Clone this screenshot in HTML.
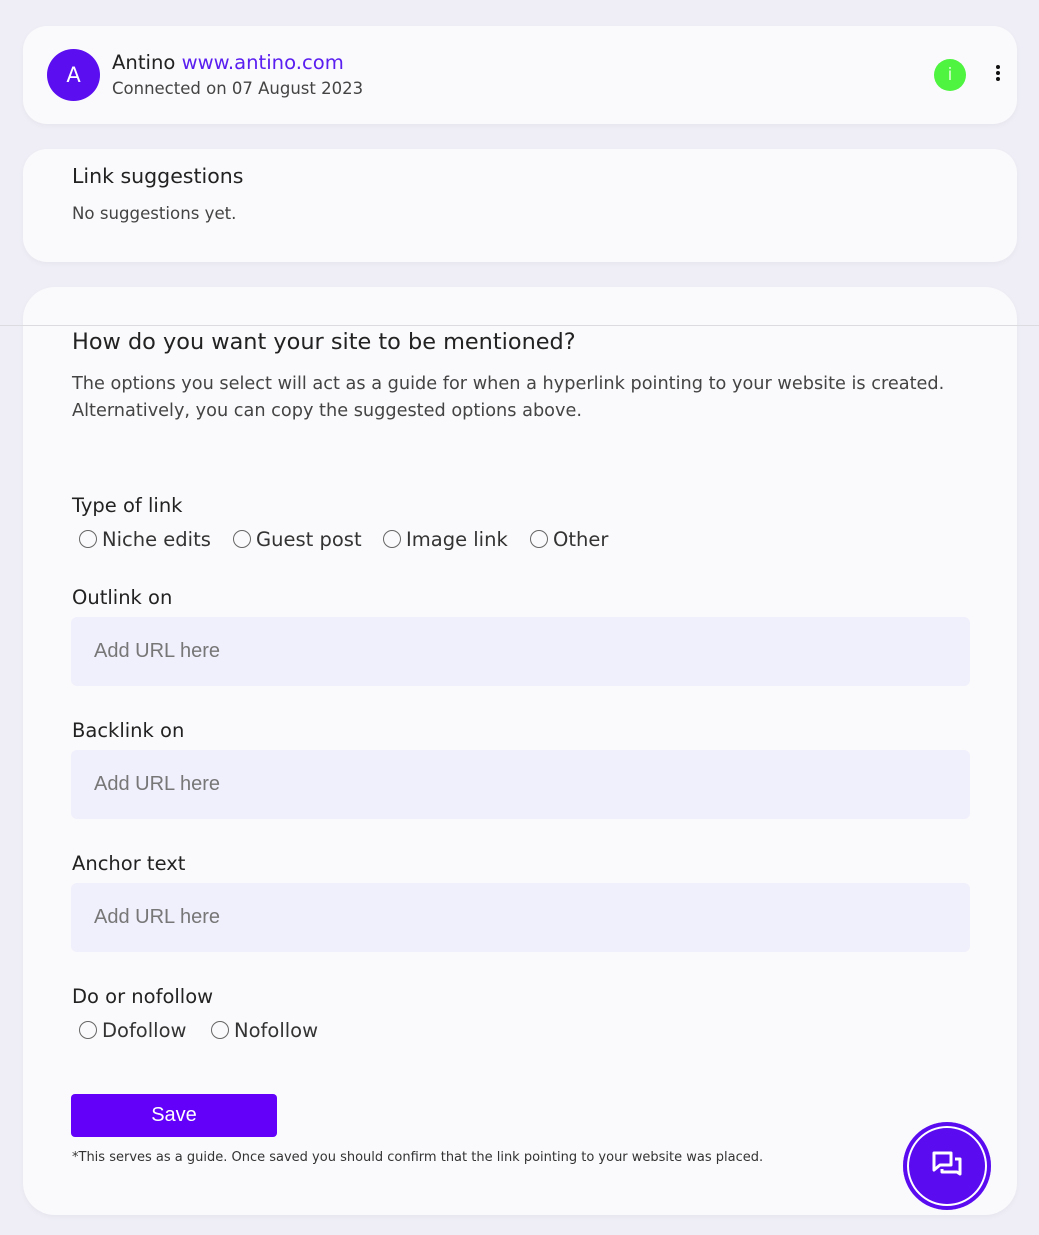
<!DOCTYPE html>
<html><head><meta charset="utf-8"><style>
*{box-sizing:border-box;margin:0;padding:0}
body{width:1039px;height:1235px;background:#efeef6;font-family:"DejaVu Sans",sans-serif;color:#222;position:relative;overflow:hidden}
.card{position:absolute;left:23px;width:994px;background:#fafafc;border-radius:24px;box-shadow:0 2px 6px rgba(0,0,0,0.04)}
.t{position:absolute;white-space:nowrap}
.inp{position:absolute;left:71px;width:899px;height:69px;background:#f0effc;border-radius:6px;font-family:"Liberation Sans",sans-serif;font-size:20px;color:#777;padding:23px 0 0 23px}
.lbl{position:absolute;left:72px;font-size:19.5px;color:#222}
.r{display:inline-block;width:18px;height:18px;border:1.5px solid #666;border-radius:50%;vertical-align:-2px;margin-right:5px}
.o{position:absolute;font-size:19.5px;color:#333;white-space:nowrap}
</style></head><body>
<div class="card" style="top:26px;height:98px"></div>
<div style="position:absolute;left:47px;top:49px;width:53px;height:52px;border-radius:50%;background:#5b0ef0;color:#fff;font-size:21px;text-align:center;line-height:52px">A</div>
<div class="t" style="left:112px;top:51px;font-size:19.6px">Antino <span style="color:#5a1ef0">www.antino.com</span></div>
<div class="t" style="left:112px;top:79px;font-size:16.5px;color:#444">Connected on 07 August 2023</div>
<div style="position:absolute;left:934px;top:59px;width:32px;height:32px;border-radius:50%;background:#4ef440;color:#dfffd8;text-align:center;line-height:32px;font-size:17px">i</div>
<div style="position:absolute;left:996px;top:65px;width:4px;height:4px;border-radius:50%;background:#111;box-shadow:0 6px 0 #111,0 12px 0 #111"></div>

<div class="card" style="top:149px;height:113px"></div>
<div class="t" style="left:72px;top:164px;font-size:20.5px">Link suggestions</div>
<div class="t" style="left:72px;top:204px;font-size:16.6px;color:#444">No suggestions yet.</div>

<div class="card" style="top:287px;height:928px;border-radius:32px"></div>
<div style="position:absolute;left:0;top:325px;width:1039px;height:1px;background:#dcdce0"></div>
<div class="t" style="left:72px;top:329px;font-size:22.4px">How do you want your site to be mentioned?</div>
<div class="t" style="left:72px;top:371px;font-size:17.7px;color:#444;line-height:27px">The options you select will act as a guide for when a hyperlink pointing to your website is created.<br>Alternatively, you can copy the suggested options above.</div>

<div class="lbl" style="top:494px">Type of link</div>
<div class="o" style="left:79px;top:528px"><i class="r"></i>Niche edits</div>
<div class="o" style="left:233px;top:528px"><i class="r"></i>Guest post</div>
<div class="o" style="left:383px;top:528px"><i class="r"></i>Image link</div>
<div class="o" style="left:530px;top:528px"><i class="r"></i>Other</div>
<div class="lbl" style="top:586px">Outlink on</div>
<div class="inp" style="top:617px">Add URL here</div>
<div class="lbl" style="top:719px">Backlink on</div>
<div class="inp" style="top:750px">Add URL here</div>
<div class="lbl" style="top:852px">Anchor text</div>
<div class="inp" style="top:883px">Add URL here</div>
<div class="lbl" style="top:985px">Do or nofollow</div>
<div class="o" style="left:79px;top:1019px"><i class="r"></i>Dofollow</div>
<div class="o" style="left:211px;top:1019px"><i class="r"></i>Nofollow</div>

<div style="position:absolute;left:71px;top:1094px;width:206px;height:43px;background:#6200fa;border-radius:4px;color:#fff;font-family:'Liberation Sans',sans-serif;font-size:20px;text-align:center;line-height:43px">Save</div>
<div class="t" style="left:72px;top:1150px;font-size:13px;color:#333">*This serves as a guide. Once saved you should confirm that the link pointing to your website was placed.</div>

<div style="position:absolute;left:903px;top:1122px;width:88px;height:88px;border-radius:50%;background:#5a0bf0;box-shadow:inset 0 0 0 4px #5a0bf0,inset 0 0 0 6px #fff"></div>
<svg style="position:absolute;left:931px;top:1150px" width="34" height="32" viewBox="0 0 34 32" fill="none" stroke="#fff" stroke-width="3" stroke-linejoin="round">
<path d="M3 3H20V15H9L3 20Z"/><path d="M24 9H29V24L26 22H11V19"/>
</svg>
</body></html>
